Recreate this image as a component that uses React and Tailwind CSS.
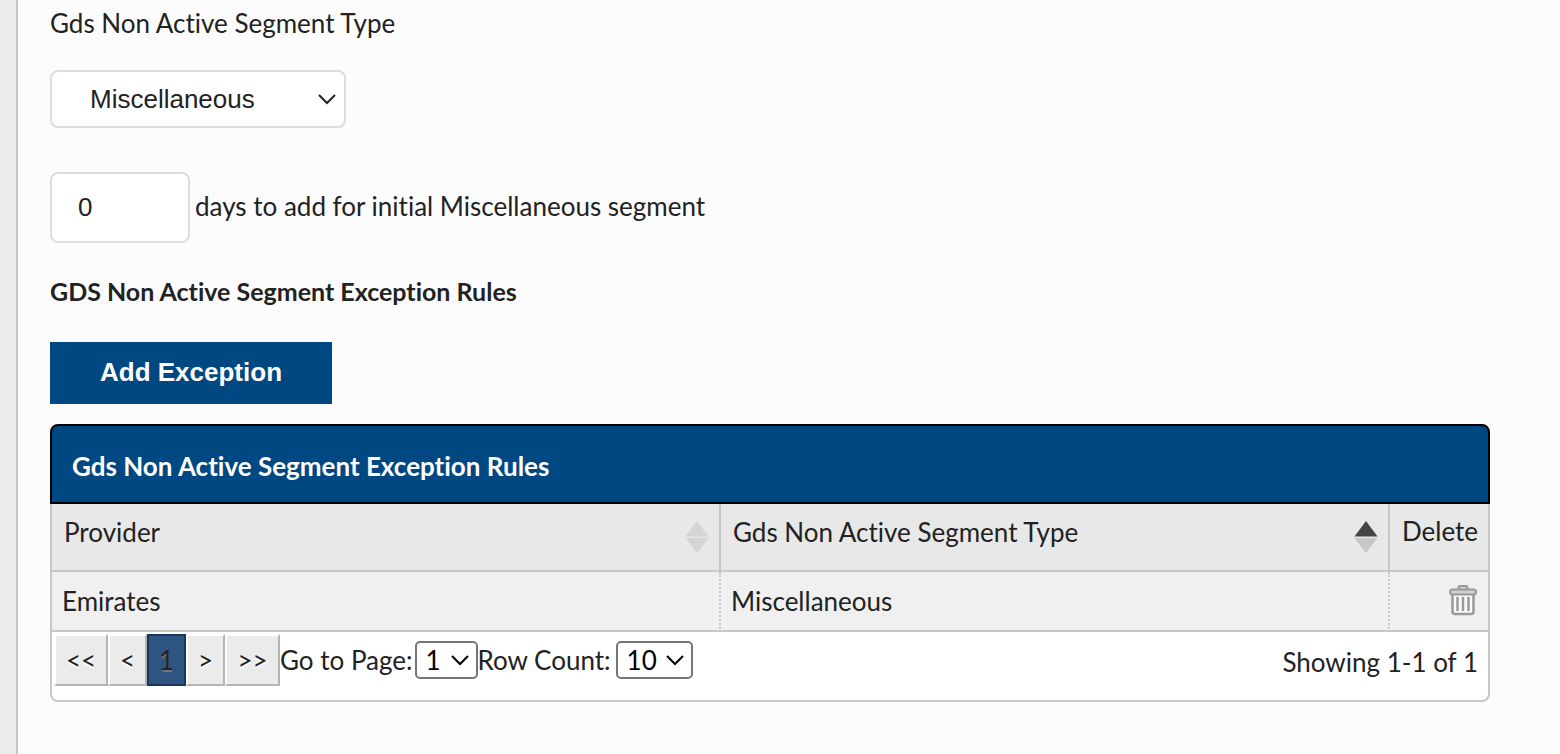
import { useState } from "react";

function Chevron({ className }) {
  return (
    <svg
      className={`pointer-events-none absolute top-1/2 -translate-y-1/2 ${className}`}
      width="20"
      height="12"
      viewBox="0 0 20 12"
      fill="none"
      stroke="currentColor"
      strokeWidth="2"
      aria-hidden="true"
    >
      <path d="M2 2l8 8 8-8" />
    </svg>
  );
}

function SortIcon({ up, down }) {
  return (
    <svg width="24" height="34" viewBox="0 0 24 34" aria-hidden="true">
      <path d="M12 1L23.500 16.500H.5z" fill={up} />
      <path d="M12 33L23.500 18H.5z" fill={down} />
    </svg>
  );
}

function TrashIcon() {
  return (
    <svg width="28" height="32" viewBox="0 0 28 32" fill="none" stroke="#999999" aria-hidden="true">
      <path d="M3.500 9.500V27.500a2.500 2.500 0 0 0 2.500 2.500h16a2.500 2.500 0 0 0 2.500-2.500V9.500z" fill="#fafafa" strokeWidth="2.500" />
      <path d="M9.500 5V3.500a1.500 1.500 0 0 1 1.500-1.500h6a1.500 1.500 0 0 1 1.500 1.500V5" fill="#d0d0d0" strokeWidth="2" />
      <rect x="1" y="5.500" width="26" height="5" rx="2.500" fill="#d0d0d0" strokeWidth="2" />
      <path d="M8.500 13v14M14 13v14M19.500 13v14" strokeWidth="2.500" />
    </svg>
  );
}

function PageButton({ children, label, width }) {
  return (
    <button
      type="button"
      aria-label={label}
      className={`h-[52px] border-2 border-t-white border-l-white border-r-[#b4b4b4] border-b-[#b4b4b4] bg-[#ebebeb] text-center [text-shadow:0_2px_0_#fff] ${width}`}
    >
      {children}
    </button>
  );
}

function SmallSelect({ id, value, onChange, options, width }) {
  return (
    <span className="relative inline-flex">
      <select
        id={id}
        value={value}
        onChange={onChange}
        className={`h-[38px] appearance-none rounded-[5px] border-2 border-[#767676] bg-white pl-[9px] text-black ${width}`}
      >
        {options.map((o) => (
          <option key={o}>{o}</option>
        ))}
      </select>
      <Chevron className="right-2 text-black" />
    </span>
  );
}

export default function App() {
  const [type, setType] = useState("Miscellaneous");
  const [days, setDays] = useState("0");
  const [page, setPage] = useState("1");
  const [rows, setRows] = useState("10");

  return (
    <div className="flex min-h-screen bg-[#fcfcfc] font-['Lato',sans-serif] text-[26px] leading-8 text-[#222222] [font-variant-ligatures:none]">
      <div className="w-[18px] shrink-0 border-r-2 border-[#c4c4c4] bg-[#ececec]" />
      <main className="flex min-w-0 flex-1 flex-col items-start pt-[7px] pr-[70px] pb-[52px] pl-8">
        <label htmlFor="type">Gds Non Active Segment Type</label>
        <div className="relative mt-[31px]">
          <select
            id="type"
            value={type}
            onChange={(e) => setType(e.target.value)}
            className="h-[58px] w-[296px] appearance-none rounded-lg border-2 border-[#dddddd] bg-white pl-[38px] font-['Liberation_Sans',sans-serif]"
          >
            <option>Miscellaneous</option>
            <option>Tour</option>
          </select>
          <Chevron className="right-[9px]" />
        </div>

        <div className="mt-11 flex items-center gap-[5px]">
          <input
            id="days"
            type="text"
            value={days}
            onChange={(e) => setDays(e.target.value)}
            className="h-[71px] w-[140px] rounded-lg border-2 border-[#dddddd] bg-white px-[26px] font-['Liberation_Sans',sans-serif]"
          />
          <label htmlFor="days" className="pb-1">days to add for initial Miscellaneous segment</label>
        </div>

        <h2 className="mt-8 text-[25px] leading-8 font-bold">GDS Non Active Segment Exception Rules</h2>
        <button
          type="button"
          className="mt-[35px] h-[62px] bg-[#004882] px-[50px] pb-0.5 font-['Liberation_Sans',sans-serif] font-bold text-white"
        >
          Add Exception
        </button>

        <section className="mt-5 w-full">
          <h3 className="flex h-20 items-center rounded-t-lg border-2 border-black bg-[#004882] px-5 pt-1 font-bold text-white">
            Gds Non Active Segment Exception Rules
          </h3>
          <div className="rounded-b-lg border-2 border-t-0 border-[#c8c8c8] bg-white">
            <table className="w-full table-fixed border-separate border-spacing-0">
              <colgroup>
                <col />
                <col />
                <col className="w-[98px]" />
              </colgroup>
              <thead>
                <tr className="bg-[#e8e8e8] text-left">
                  <th className="h-[68px] border-r-2 border-b-2 border-[#c8c8c8] pr-2.5 pl-3 font-normal">
                    <button type="button" className="flex w-full items-start justify-between">
                      <span className="-mt-1">Provider</span>
                      <SortIcon up="#d4d4d4" down="#d4d4d4" />
                    </button>
                  </th>
                  <th className="border-r-2 border-b-2 border-[#c8c8c8] pr-2.5 pl-3 font-normal">
                    <button type="button" className="flex w-full items-start justify-between">
                      <span className="-mt-1">Gds Non Active Segment Type</span>
                      <SortIcon up="#444444" down="#c8c8c8" />
                    </button>
                  </th>
                  <th className="border-b-2 border-[#c8c8c8] pb-3 pl-3 font-normal">Delete</th>
                </tr>
              </thead>
              <tbody>
                <tr className="bg-[#f0f0f0]">
                  <td className="h-[60px] border-r-2 border-b-2 border-[#c8c8c8] [border-right-style:dotted] pl-2.5">Emirates</td>
                  <td className="border-r-2 border-b-2 border-[#c8c8c8] [border-right-style:dotted] pl-2.5">Miscellaneous</td>
                  <td className="border-b-2 border-[#c8c8c8] pr-[11px] pb-0.5">
                    <button type="button" aria-label="Delete" className="ml-auto block">
                      <TrashIcon />
                    </button>
                  </td>
                </tr>
              </tbody>
            </table>
            <div className="flex items-start justify-between pt-0.5 pr-2.5 pb-3.5 pl-0.5">
              <div className="flex items-center">
                <PageButton label="First page" width="w-[54px]">&lt;&lt;</PageButton>
                <PageButton label="Previous page" width="w-[39px]">&lt;</PageButton>
                <button
                  type="button"
                  aria-current="page"
                  className="h-[52px] w-[39px] border-2 border-[#17375e] bg-[#2e5480] text-center [text-shadow:0_2px_0_#777]"
                >
                  1
                </button>
                <PageButton label="Next page" width="w-[39px]">&gt;</PageButton>
                <PageButton label="Last page" width="w-[55px]">&gt;&gt;</PageButton>
                <label htmlFor="page" className="mr-0.5">Go to Page:</label>
                <SmallSelect id="page" value={page} onChange={(e) => setPage(e.target.value)} options={["1"]} width="w-[63px]" />
                <label htmlFor="rows" className="mr-[5px]">Row Count:</label>
                <SmallSelect id="rows" value={rows} onChange={(e) => setRows(e.target.value)} options={["10", "20", "50"]} width="w-[77px]" />
              </div>
              <span className="pt-3">Showing 1-1 of 1</span>
            </div>
          </div>
        </section>
      </main>
    </div>
  );
}
